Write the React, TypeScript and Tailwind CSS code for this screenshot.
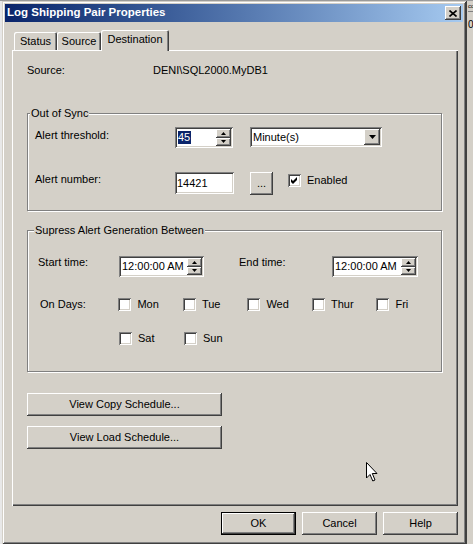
import React from "react";

const raised =
  "shadow-[inset_-1px_-1px_#404040,inset_1px_1px_#ffffff,inset_-2px_-2px_#808080,inset_2px_2px_#d4d0c8]";
const sunken =
  "shadow-[inset_1px_1px_#808080,inset_-1px_-1px_#ffffff,inset_2px_2px_#404040,inset_-2px_-2px_#d4d0c8]";
const etched = "border border-[#808080] shadow-[inset_1px_1px_#ffffff,1px_1px_#ffffff]";

function Tri({ dir, w, h }: { dir: "up" | "down"; w: number; h: number }) {
  const pts = dir === "up" ? `0,${h} ${w},${h} ${w / 2},0` : `0,0 ${w},0 ${w / 2},${h}`;
  return (
    <svg width={w} height={h} viewBox={`0 0 ${w} ${h}`} className="block">
      <polygon points={pts} fill="#000000" />
    </svg>
  );
}

function SpinButtons() {
  return (
    <div className="flex w-[15px] flex-col">
      <div className={`flex flex-1 items-center justify-center bg-[#d4d0c8] ${raised}`}>
        <Tri dir="up" w={5} h={3} />
      </div>
      <div className={`flex flex-1 items-center justify-center bg-[#d4d0c8] ${raised}`}>
        <Tri dir="down" w={5} h={3} />
      </div>
    </div>
  );
}

function SpinEdit({ value, className, selected }: { value: string; className: string; selected?: boolean }) {
  return (
    <div className={`flex h-[21px] bg-white p-[2px] ${sunken} ${className}`}>
      <div className="flex flex-1 items-center pl-[1px]">
        <span className={selected ? "bg-[#0a246a] pr-[1px] leading-[13px] text-white" : "leading-[13px]"}>
          {value}
        </span>
      </div>
      <SpinButtons />
    </div>
  );
}

function CheckBox({ label, checked }: { label: string; checked?: boolean }) {
  return (
    <div className="flex items-center gap-[6px]">
      <div className={`flex h-[13px] w-[13px] items-center justify-center bg-white ${sunken}`}>
        {checked && (
          <svg width="7" height="7" viewBox="0 0 7 7" className="block">
            <polygon points="0,2 2,4 6,0 6,3 2,7 0,5" fill="#000000" />
          </svg>
        )}
      </div>
      <span className="leading-[13px]">{label}</span>
    </div>
  );
}

function Button({ label, className, isDefault }: { label: string; className: string; isDefault?: boolean }) {
  return (
    <div
      className={`flex h-[23px] items-center justify-center bg-[#d4d0c8] ${raised} ${
        isDefault ? "border border-black" : ""
      } ${className}`}
    >
      {label}
    </div>
  );
}

function Tab({ label, selected, className }: { label: string; selected?: boolean; className: string }) {
  return (
    <div
      className={`flex items-center justify-center rounded-t-[2px] bg-[#d4d0c8] shadow-[inset_1px_1px_#ffffff,inset_-1px_0_#404040,inset_-2px_0_#808080] ${
        selected ? "relative z-10 -mb-[1px] h-[21px] pb-[2px]" : "h-[18px]"
      } ${className}`}
    >
      {label}
    </div>
  );
}

function GroupLabel({ text, className }: { text: string; className: string }) {
  return <div className={`-mt-[7px] h-[13px] w-fit bg-[#d4d0c8] px-[1px] leading-[13px] ${className}`}>{text}</div>;
}

const days1 = ["Mon", "Tue", "Wed", "Thur", "Fri"];
const days2 = ["Sat", "Sun"];

export default function App() {
  return (
    <div className="relative flex h-[553px] w-[473px] flex-col overflow-hidden bg-white font-['Liberation_Sans',Arial,sans-serif] text-[11px] text-black">
      <div className="h-[1px] bg-[#9a9a9a]" />
      <div className="flex">
        <div className="w-[2px] bg-[#e8e8e8]" />

        {/* dialog window */}
        <div
          className={`flex h-[543px] w-[464px] flex-col bg-[#d4d0c8] p-[3px] shadow-[inset_1px_1px_#d4d0c8,inset_-1px_-1px_#404040,inset_2px_2px_#ffffff,inset_-2px_-2px_#808080]`}
        >
          <div className="flex h-[18px] items-center justify-between bg-gradient-to-r from-[#0a246a] to-[#a6caf0] pl-[2px] pr-[2px]">
            <span className="text-[11.5px] font-bold text-white">Log Shipping Pair Properties</span>
            <div className={`flex h-[14px] w-[16px] items-center justify-center bg-[#d4d0c8] ${raised}`}>
              <svg width="8" height="7" viewBox="0 0 8 7" className="block">
                <path d="M0.5 0.5 L7.5 6.5 M7.5 0.5 L0.5 6.5" stroke="#000000" strokeWidth="1.6" />
              </svg>
            </div>
          </div>

          <div className="flex flex-1 flex-col pl-[7px] pr-[5px] pt-[8px]">
            {/* tabs */}
            <div className="flex h-[20px] items-end pl-[2px]">
              <Tab label="Status" className="w-[43px]" />
              <Tab label="Source" className="w-[44px]" />
              <Tab label="Destination" selected className="w-[68px]" />
            </div>

            {/* tab page */}
            <div
              className={`flex h-[456px] flex-col shadow-[inset_1px_1px_#ffffff,inset_-1px_-1px_#404040,inset_-2px_-2px_#808080]`}
            >
              <div className="mt-[14px] flex h-[13px] items-center pl-[15px] leading-[13px]">
                <span className="w-[126px]">Source:</span>
                <span>DENI\SQL2000.MyDB1</span>
              </div>

              {/* Out of Sync */}
              <div className={`ml-[15px] mt-[36px] h-[98px] w-[415px] ${etched}`}>
                <GroupLabel text="Out of Sync" className="ml-[2px]" />
                <div className="mt-[7px] flex items-start pl-[7px]">
                  <span className="mt-[2px] w-[140px] leading-[13px]">Alert threshold:</span>
                  <SpinEdit value="45" selected className="w-[58px]" />
                  <div className={`ml-[17px] flex h-[20px] w-[132px] bg-white p-[2px] ${sunken}`}>
                    <div className="flex flex-1 items-center pl-[1px]">Minute(s)</div>
                    <div className={`flex w-[16px] items-center justify-center bg-[#d4d0c8] ${raised}`}>
                      <Tri dir="down" w={7} h={4} />
                    </div>
                  </div>
                </div>
                <div className="mt-[24px] flex items-start pl-[7px]">
                  <span className="mt-[1px] w-[140px] leading-[13px]">Alert number:</span>
                  <div className={`flex h-[22px] w-[59px] items-center bg-white p-[2px] ${sunken}`}>14421</div>
                  <Button label="..." className="ml-[16px] h-[23px] w-[23px]" />
                  <div className="ml-[15px] mt-[2px]">
                    <CheckBox label="Enabled" checked />
                  </div>
                </div>
              </div>

              {/* Supress Alert Generation Between */}
              <div className={`ml-[15px] mt-[19px] h-[142px] w-[415px] ${etched}`}>
                <GroupLabel text="Supress Alert Generation Between" className="ml-[6px]" />
                <div className="mt-[19px] flex items-start pl-[10px]">
                  <span className="w-[81px] leading-[13px]">Start time:</span>
                  <SpinEdit value="12:00:00 AM" className="w-[85px]" />
                  <span className="ml-[35px] w-[93px] leading-[13px]">End time:</span>
                  <SpinEdit value="12:00:00 AM" className="w-[86px]" />
                </div>
                <div className="mt-[21px] flex items-center pl-[12px]">
                  <span className="w-[79px] leading-[13px]">On Days:</span>
                  {days1.map((d) => (
                    <div key={d} className="w-[65px]">
                      <CheckBox label={d} />
                    </div>
                  ))}
                </div>
                <div className="mt-[21px] flex items-center pl-[91px]">
                  {days2.map((d) => (
                    <div key={d} className="w-[65px]">
                      <CheckBox label={d} />
                    </div>
                  ))}
                </div>
              </div>

              <Button label="View Copy Schedule..." className="ml-[15px] mt-[21px] w-[195px]" />
              <Button label="View Load Schedule..." className="ml-[15px] mt-[10px] w-[195px]" />
            </div>

            {/* dialog buttons */}
            <div className="mt-[6px] flex justify-end gap-[6px]">
              <Button label="OK" isDefault className="w-[75px]" />
              <Button label="Cancel" className="w-[75px]" />
              <Button label="Help" className="w-[75px]" />
            </div>
          </div>
        </div>

        {/* window behind, on the right */}
        <div className="flex h-[543px] flex-1 flex-col overflow-hidden border-l border-[#404040] bg-[#d4d0c8] pl-[1px] text-[6px] leading-[10px]">
          <span className="border-b border-[#808080]">co</span>
          <span className="mt-[8px] text-[10px]">0</span>
        </div>
      </div>

      {/* mouse pointer */}
      <svg
        width="12"
        height="20"
        viewBox="0 0 12 20"
        className="absolute left-[366px] top-[462px]"
      >
        <path
          d="M0.5 0.5 L0.5 16 L4 12.5 L6.8 19 L9 18 L6.3 11.5 L11 11.5 Z"
          fill="#ffffff"
          stroke="#000000"
          strokeWidth="1"
        />
      </svg>
    </div>
  );
}
